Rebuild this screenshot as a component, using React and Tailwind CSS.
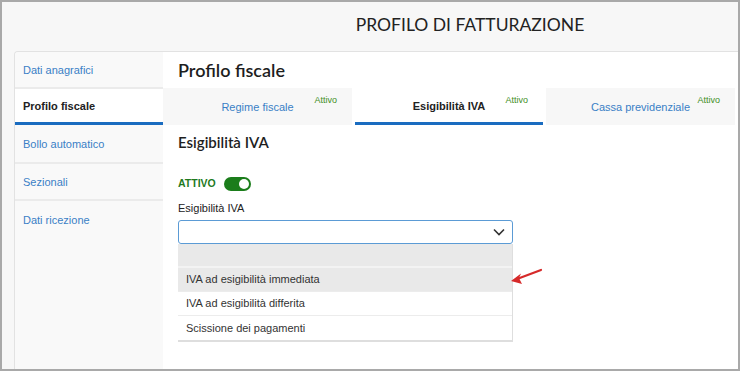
import React from 'react';

const sideItems = [
  { label: 'Dati anagrafici', h: 'h-[37px] border-b-2 border-[#ebebeb]' },
  { label: 'Profilo fiscale', h: 'h-[36px] border-b-[3px] border-[#1a6cc0] bg-white', active: true },
  { label: 'Bollo automatico', h: 'h-[39px] border-b-2 border-[#ebebeb]' },
  { label: 'Sezionali', h: 'h-[37px] border-b-2 border-[#ebebeb]' },
  { label: 'Dati ricezione', h: 'h-[37px]' },
];

const tabs = [
  { label: 'Regime fiscale', w: 'w-[189px]' },
  { label: 'Esigibilità IVA', w: 'w-[188px]', active: true },
  { label: 'Cassa previdenziale', w: 'w-[189px]' },
];

const options = [
  { label: '', cls: 'bg-[#e9e9e9] border-b-2 border-[#f3f3f3]' },
  { label: 'IVA ad esigibilità immediata', cls: 'bg-[#e9e9e9] border-b border-[#ececec]' },
  { label: 'IVA ad esigibilità differita', cls: 'bg-white border-b border-[#ececec]' },
  { label: 'Scissione dei pagamenti', cls: 'bg-white' },
];

export default function App() {
  return (
    <div className="w-[740px] h-[371px] overflow-hidden border-2 border-[#a9a9a9] bg-[#f7f7f7] flex flex-col font-['Liberation_Sans',Arial,sans-serif]">
      {/* page title */}
      <div className="h-[49px] shrink-0 flex items-center justify-center pl-[200px]">
        <h1 className="font-['Lato',sans-serif] text-[17.5px] text-[#222] mt-[-2px]">
          PROFILO DI FATTURAZIONE
        </h1>
      </div>

      <div className="flex-1 flex ml-[12px] border-t border-l border-[#e2e2e2] rounded-tl-[4px] overflow-hidden">
        {/* sidebar */}
        <div className="w-[148px] shrink-0 bg-[#f9f9f9] flex flex-col">
          {sideItems.map((item) => (
            <div
              key={item.label}
              className={`${item.h} flex items-center pl-[8px] pt-[1px] text-[11px] ${
                item.active ? 'font-bold text-[#222]' : 'text-[#3a7fc6]'
              }`}
            >
              {item.label}
            </div>
          ))}
        </div>

        {/* main panel */}
        <div className="flex-1 bg-white flex flex-col relative">
          <div className="h-[36px] flex items-center pl-[15px]">
            <h2 className="font-['Lato',sans-serif] font-semibold text-[18px] text-[#1e1e1e]">Profilo fiscale</h2>
          </div>

          <div className="h-[37px] flex gap-[3px]">
            {tabs.map((tab) => (
              <div
                key={tab.label}
                className={`${tab.w} relative flex items-center justify-center pt-[2px] text-[11px] ${
                  tab.active
                    ? 'bg-white border-b-[3px] border-[#1a6cc0] font-bold text-[#222]'
                    : 'bg-[#f7f7f7] text-[#3a7fc6]'
                }`}
              >
                {tab.label}
                <span className="absolute top-[6px] right-[15px] text-[9px] text-[#3f8f1f] font-normal">Attivo</span>
              </div>
            ))}
          </div>

          <div className="pl-[15px] pt-[8px] flex flex-col">
            <h3 className="font-['Lato',sans-serif] font-semibold text-[15px] text-[#1e1e1e] leading-[18px]">
              Esigibilità IVA
            </h3>

            <div className="mt-[25px] flex items-center gap-[8px]">
              <span className="text-[10.5px] font-bold text-[#1f7a1f]">ATTIVO</span>
              <div className="w-[27px] h-[14px] rounded-full bg-[#1b7d1b] flex items-center justify-end pr-[2px]">
                <div className="w-[10px] h-[10px] rounded-full bg-white"></div>
              </div>
            </div>

            <div className="mt-[10px] text-[11px] text-[#222] leading-[13px]">Esigibilità IVA</div>

            <div className="mt-[5px] w-[335px] h-[24px] border border-[#5b9bd5] rounded-[3px] flex items-center justify-end pr-[7px]">
              <svg width="12" height="8" viewBox="0 0 12 8" fill="none">
                <path d="M1 1.5 L6 6.5 L11 1.5" stroke="#333" strokeWidth="1.6" />
              </svg>
            </div>

            <div className="w-[335px] border-r border-b-2 border-[#dedede] flex flex-col">
              {options.map((opt, i) => (
                <div
                  key={i}
                  className={`h-[24px] flex items-center pl-[8px] text-[11px] text-[#333] ${opt.cls}`}
                >
                  {opt.label}
                </div>
              ))}
            </div>
          </div>

          {/* red pointer arrow */}
          <svg
            className="absolute left-[346px] top-[216px]"
            width="34"
            height="20"
            viewBox="0 0 34 20"
            fill="none"
          >
            <path d="M32 2 L8 11" stroke="#d62a2a" strokeWidth="2.2" strokeLinecap="round" />
            <path d="M2 13 L12 5.5 L10 10 L13 16 Z" fill="#d62a2a" />
          </svg>
        </div>
      </div>
    </div>
  );
}
